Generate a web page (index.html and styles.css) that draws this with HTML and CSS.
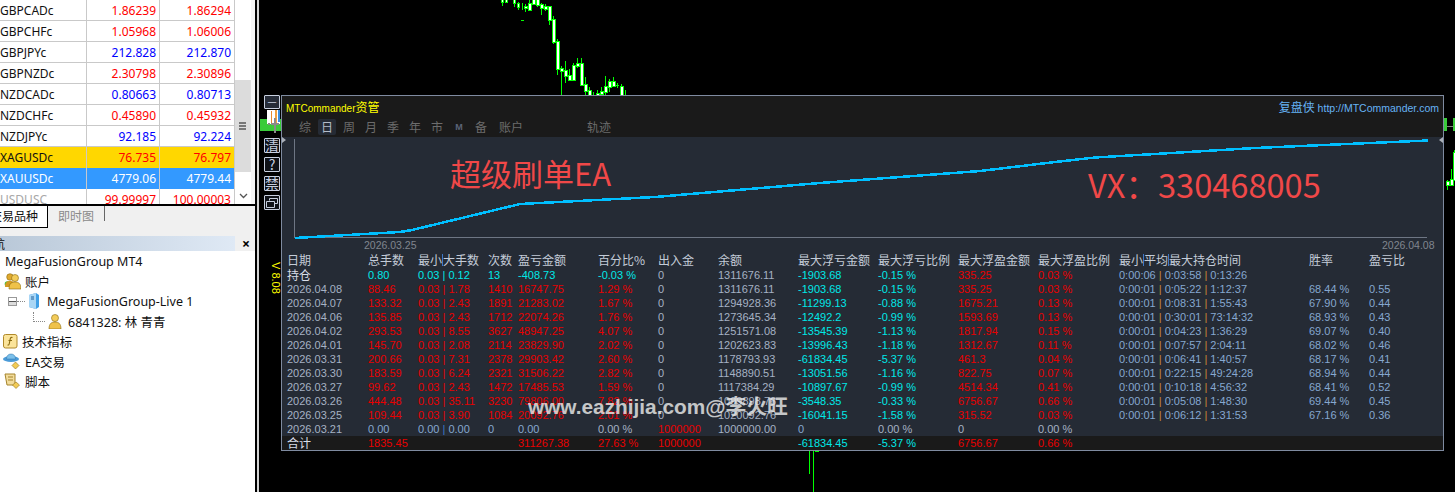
FILE: index.html
```html
<!DOCTYPE html>
<html lang="zh">
<head>
<meta charset="utf-8">
<title>MTCommander</title>
<link rel="stylesheet" href="styles.css">
</head>
<body>
<div class="app">
  <aside class="left">
    <div class="watch">
      <div class="quotes">
        <div class="quote"><span class="sym">GBPCADc</span><span class="px dn">1.86239</span><span class="px dn">1.86294</span></div>
        <div class="quote"><span class="sym">GBPCHFc</span><span class="px dn">1.05968</span><span class="px dn">1.06006</span></div>
        <div class="quote"><span class="sym">GBPJPYc</span><span class="px up">212.828</span><span class="px up">212.870</span></div>
        <div class="quote"><span class="sym">GBPNZDc</span><span class="px dn">2.30798</span><span class="px dn">2.30896</span></div>
        <div class="quote"><span class="sym">NZDCADc</span><span class="px up">0.80663</span><span class="px up">0.80713</span></div>
        <div class="quote"><span class="sym">NZDCHFc</span><span class="px dn">0.45890</span><span class="px dn">0.45932</span></div>
        <div class="quote"><span class="sym">NZDJPYc</span><span class="px up">92.185</span><span class="px up">92.224</span></div>
        <div class="quote gold"><span class="sym">XAGUSDc</span><span class="px dn">76.735</span><span class="px dn">76.797</span></div>
        <div class="quote sel"><span class="sym">XAUUSDc</span><span class="px">4779.06</span><span class="px">4779.44</span></div>
        <div class="quote last"><span class="sym off">USDUSC</span><span class="px dn">99.99997</span><span class="px dn">100.00003</span></div>
      </div>
      <div class="scroll">
        <div class="track-top"></div>
        <div class="thumb"><svg width="8" height="9" viewBox="0 0 8 9"><path d="M0 1h7M0 4h7M0 7h7" stroke="#555" stroke-width="1.4"/></svg></div>
        <div class="track-bottom"></div>
        <div class="arrow"><svg width="9" height="6" viewBox="0 0 9 6"><path d="M1 1l3.500 3.500L8 1" stroke="#555" fill="none" stroke-width="1.300"/></svg></div>
      </div>
    </div>
    <div class="tabs">
      <div class="tab on"><span>交易品种</span></div>
      <div class="tab"><span>即时图</span></div>
      <div class="tab-sep"></div>
    </div>
    <div class="navhead"><span class="navtitle">导航</span><span class="navclose">×</span></div>
    <div class="tree">
      <div class="node n0"><span>MegaFusionGroup MT4</span></div>
      <div class="node n1">
        <svg width="18" height="18" viewBox="0 0 18 18"><circle cx="4.500" cy="12" r="2.800" fill="#3fbf3f"/><circle cx="7" cy="5" r="3.300" fill="#e0a92e" stroke="#8a6a10" stroke-width=".6"/><path d="M2 15c0-5 2-6 5-6s5 1 5 6z" fill="#d39a22"/><circle cx="12" cy="6" r="3.500" fill="#f3cc5a" stroke="#8a6a10" stroke-width=".6"/><path d="M6 17c0-6 3-7 6-7s6 1 6 7z" fill="#efc24a" stroke="#8a6a10" stroke-width=".6"/></svg>
        <span>账户</span>
      </div>
      <div class="node n2">
        <i class="expander"></i><i class="dots-h"></i>
        <svg width="12" height="16" viewBox="0 0 12 16"><path d="M1 2l7-2 3 2v12l-3 2-7-2z" fill="#3f9fe6"/><path d="M1 2l7-2v16l-7-2z" fill="#a9d6f5"/><path d="M3 4h3M3 6h3" stroke="#20609a"/></svg>
        <span>MegaFusionGroup-Live 1</span>
      </div>
      <div class="node n3">
        <i class="dots-l"></i>
        <svg width="14" height="15" viewBox="0 0 14 15"><circle cx="7" cy="4" r="3.500" fill="#f3cc5a" stroke="#8a6a10" stroke-width=".6"/><path d="M1 15c0-6 3-7 6-7s6 1 6 7z" fill="#efc24a" stroke="#8a6a10" stroke-width=".6"/></svg>
        <span>6841328: 林 青青</span>
      </div>
      <div class="node n1">
        <svg width="15" height="15" viewBox="0 0 15 15"><rect x=".5" y=".5" width="13.500" height="13.500" rx="2" fill="#fbe49a" stroke="#b0892a"/><path d="M9.500 3.500c-2-.5-2.200.8-2.500 2.500l-.8 4c-.2 1-.8 1.200-1.700 1M5.500 6.500h3.500" stroke="#8a6a10" fill="none" stroke-width="1.100"/></svg>
        <span>技术指标</span>
      </div>
      <div class="node n1">
        <svg width="18" height="16" viewBox="0 0 18 16"><ellipse cx="8" cy="6" rx="8" ry="3" fill="#4a9bd8"/><path d="M3.500 6c0-3.500 2-5 4.500-5s4.500 1.500 4.500 5z" fill="#7cc0ea" stroke="#2f72a8" stroke-width=".5"/><path d="M12.500 9l3.500 3.500-3.500 3.500-3.500-3.500z" fill="#f2cb55" stroke="#96721a" stroke-width=".6"/></svg>
        <span>EA交易</span>
      </div>
      <div class="node n1">
        <svg width="18" height="16" viewBox="0 0 18 16"><path d="M2 1h10v11H4z" fill="#f2dc9c" stroke="#a5842c"/><path d="M5 4h5M5 7h5" stroke="#a5842c"/><path d="M13 9l3.500 3-3.500 3.500-3.500-3.500z" fill="#f2cb55" stroke="#96721a" stroke-width=".6"/></svg>
        <span>脚本</span>
      </div>
    </div>
  </aside>

  <main class="chart">
    <svg class="candles" width="1196" height="492" viewBox="259 0 1196 492" shape-rendering="crispEdges">
      <path class="wick" d="M502.500 0V6M514.500 0V7M518.500 2V10M522.500 3V10M525.500 4V12M529.500 0V11M537.500 0V7M541.500 3V15M545.500 4V11M549.500 6V25M553.500 16V44M557.500 39V75M561.500 66V95M565.500 61V83M569.500 69V81M573.500 63V81M577.500 58V68M581.500 58V86M585.500 77V95M589.500 87V95M593.500 92V95M597.500 90V95M601.500 87V95M605.500 76V95M609.500 79V92M613.500 77V87M617.500 83V88M621.500 84V95M625.500 90V95M809.500 451V474M813.500 451V492M815 451.500H819M1447.500 180V190M1451.500 169V185M1454.500 150V180M521 20.500H524M616 85.500H619"/>
      <g class="body">
        <rect x="501.500" y="-1" width="2" height="3"/><rect x="505.500" y="-1" width="2" height="3"/><rect x="513.500" y="-1" width="2" height="4"/><rect x="517.500" y="3" width="2" height="4"/><rect x="524" y="6" width="3" height="2"/><rect x="528" y="3" width="3" height="7"/><rect x="532" y="-1" width="3" height="5"/><rect x="536" y="-1" width="3" height="6"/><rect x="540" y="4" width="3" height="4"/><rect x="544" y="6" width="3" height="3"/><rect x="548" y="6" width="3" height="14"/><rect x="552" y="19" width="3" height="23"/><rect x="556" y="41" width="3" height="28"/><rect x="560" y="68" width="3" height="3"/><rect x="564" y="70" width="3" height="6"/><rect x="568" y="75" width="3" height="5"/><rect x="572" y="65" width="3" height="15"/><rect x="576" y="63" width="3" height="3"/><rect x="580" y="63" width="3" height="22"/><rect x="584" y="84" width="3" height="7"/><rect x="588" y="90" width="3" height="6"/><rect x="596" y="93" width="3" height="3"/><rect x="600" y="91" width="3" height="3"/><rect x="604" y="86" width="3" height="6"/><rect x="608" y="81" width="3" height="6"/><rect x="612" y="81" width="3" height="5"/><rect x="620" y="86" width="3" height="10"/><rect x="1446" y="181" width="3" height="4"/><rect x="1450" y="179" width="3" height="6"/><rect x="1453" y="152" width="3" height="28"/>
      </g>
      <path class="gridline" d="M278 126.500H281M1447 126.500H1453"/>
      <path class="lime" d="M260 119h21v12h-21zM1444 118h3v13h-3zM1453 118h2v13h-2z"/>
    </svg>

    <svg class="glitch" width="15" height="24" viewBox="0 0 15 24" shape-rendering="crispEdges">
      <rect x="0" y="0" width="13" height="14" fill="#fff"/><rect x="4" y="1" width="1" height="12" fill="#e88a2e"/><rect x="8" y="0" width="2" height="13" fill="#f0a040"/><rect x="11" y="0" width="2" height="12" fill="#3a8ee0"/>
      <path d="M4 13h8v2H4zM1 13h2v2H1zM7 8h2v15H7z" fill="#8a8a8a"/>
    </svg>

    <div class="side">
      <div class="sbtn first">一</div>
      <div class="sbtn">清</div>
      <div class="sbtn">?</div>
      <div class="sbtn">禁</div>
      <div class="sbtn"><svg width="12" height="10" viewBox="0 0 12 10"><path d="M3.500 2.500v-2h8v5h-3M.5 3.500h8v6h-8z" fill="none" stroke="#c8d0e0"/></svg></div>
    </div>
    <div class="version">V 8.08</div>

    <section class="panel">
      <header class="phead">
        <div class="ptitle">
          <span class="brand">MTCommander<b>资管</b></span>
          <span class="plink"><b>复盘侠</b> http://MTCommander.com</span>
        </div>
        <nav class="pnav">
          <span>综</span><span class="active">日</span><span>周</span><span>月</span><span>季</span><span>年</span><span>市</span><span class="m">M</span><span>备</span><span class="wide">账户</span><span class="track">轨迹</span>
        </nav>
      </header>
      <div class="graph">
        <svg class="curve" width="1161" height="115" viewBox="282 137 1161 115">
          <path class="axis" d="M294.500 139V237.500H1427" shape-rendering="crispEdges"/>
          <path class="equity" d="M295 238L400 232L412 230L520 204L655 197L820 183L980 171L1055 162L1095 157.500L1155 154L1255 148L1428 140.500"/>
          <path class="marker" d="M282 137l4 3-4 3zM1443 137l-4 3 4 3z"/>
        </svg>
        <div class="stamp stamp-a">超级刷单EA</div>
        <div class="stamp stamp-b">VX：330468005</div>
        <div class="gdate d1">2026.03.25</div>
        <div class="gdate d2">2026.04.08</div>
      </div>
      <div class="table">
        <div class="row head"><span>日期</span><span>总手数</span><span>最小<i class="bar-b"></i>大手数</span><span>次数</span><span>盈亏金额</span><span>百分比%</span><span>出入金</span><span>余额</span><span>最大浮亏金额</span><span>最大浮亏比例</span><span>最大浮盈金额</span><span>最大浮盈比例</span><span>最小<i class="bar-b"></i>平均<i class="bar-b"></i>最大持仓时间</span><span>胜率</span><span>盈亏比</span></div>
        <div class="row hold"><span class="label">持仓</span><span class="c">0.80</span><span class="c">0.03 | 0.12</span><span class="c">13</span><span class="c">-408.73</span><span class="c">-0.03 %</span><span class="g">0</span><span class="g">1311676.11</span><span class="c">-1903.68</span><span class="c">-0.15 %</span><span class="r">335.25</span><span class="r">0.03 %</span><span class="b">0:00:06 <i class="bar-o">|</i> 0:03:58 <i class="bar-o">|</i> 0:13:26</span><span></span><span></span></div>
        <div class="row"><span class="g">2026.04.08</span><span class="r">88.46</span><span class="r">0.03 | 1.78</span><span class="r">1410</span><span class="r">16747.75</span><span class="r">1.29 %</span><span class="g">0</span><span class="g">1311676.11</span><span class="c">-1903.68</span><span class="c">-0.15 %</span><span class="r">335.25</span><span class="r">0.03 %</span><span class="b">0:00:01 <i class="bar-o">|</i> 0:05:22 <i class="bar-o">|</i> 1:12:37</span><span class="b">68.44 %</span><span class="b">0.55</span></div>
        <div class="row"><span class="g">2026.04.07</span><span class="r">133.32</span><span class="r">0.03 | 2.43</span><span class="r">1891</span><span class="r">21283.02</span><span class="r">1.67 %</span><span class="g">0</span><span class="g">1294928.36</span><span class="c">-11299.13</span><span class="c">-0.88 %</span><span class="r">1675.21</span><span class="r">0.13 %</span><span class="b">0:00:01 <i class="bar-o">|</i> 0:08:31 <i class="bar-o">|</i> 1:55:43</span><span class="b">67.90 %</span><span class="b">0.44</span></div>
        <div class="row"><span class="g">2026.04.06</span><span class="r">135.85</span><span class="r">0.03 | 2.43</span><span class="r">1712</span><span class="r">22074.26</span><span class="r">1.76 %</span><span class="g">0</span><span class="g">1273645.34</span><span class="c">-12492.2</span><span class="c">-0.99 %</span><span class="r">1593.69</span><span class="r">0.13 %</span><span class="b">0:00:01 <i class="bar-o">|</i> 0:30:01 <i class="bar-o">|</i> 73:14:32</span><span class="b">68.93 %</span><span class="b">0.43</span></div>
        <div class="row"><span class="g">2026.04.02</span><span class="r">293.53</span><span class="r">0.03 | 8.55</span><span class="r">3627</span><span class="r">48947.25</span><span class="r">4.07 %</span><span class="g">0</span><span class="g">1251571.08</span><span class="c">-13545.39</span><span class="c">-1.13 %</span><span class="r">1817.94</span><span class="r">0.15 %</span><span class="b">0:00:01 <i class="bar-o">|</i> 0:04:23 <i class="bar-o">|</i> 1:36:29</span><span class="b">69.07 %</span><span class="b">0.40</span></div>
        <div class="row"><span class="g">2026.04.01</span><span class="r">145.70</span><span class="r">0.03 | 2.08</span><span class="r">2114</span><span class="r">23829.90</span><span class="r">2.02 %</span><span class="g">0</span><span class="g">1202623.83</span><span class="c">-13996.43</span><span class="c">-1.18 %</span><span class="r">1312.67</span><span class="r">0.11 %</span><span class="b">0:00:01 <i class="bar-o">|</i> 0:07:57 <i class="bar-o">|</i> 2:04:11</span><span class="b">68.02 %</span><span class="b">0.46</span></div>
        <div class="row"><span class="g">2026.03.31</span><span class="r">200.66</span><span class="r">0.03 | 7.31</span><span class="r">2378</span><span class="r">29903.42</span><span class="r">2.60 %</span><span class="g">0</span><span class="g">1178793.93</span><span class="c">-61834.45</span><span class="c">-5.37 %</span><span class="r">461.3</span><span class="r">0.04 %</span><span class="b">0:00:01 <i class="bar-o">|</i> 0:06:41 <i class="bar-o">|</i> 1:40:57</span><span class="b">68.17 %</span><span class="b">0.41</span></div>
        <div class="row"><span class="g">2026.03.30</span><span class="r">183.59</span><span class="r">0.03 | 6.24</span><span class="r">2321</span><span class="r">31506.22</span><span class="r">2.82 %</span><span class="g">0</span><span class="g">1148890.51</span><span class="c">-13051.56</span><span class="c">-1.16 %</span><span class="r">822.75</span><span class="r">0.07 %</span><span class="b">0:00:01 <i class="bar-o">|</i> 0:22:15 <i class="bar-o">|</i> 49:24:28</span><span class="b">68.94 %</span><span class="b">0.44</span></div>
        <div class="row"><span class="g">2026.03.27</span><span class="r">99.62</span><span class="r">0.03 | 2.43</span><span class="r">1472</span><span class="r">17485.53</span><span class="r">1.59 %</span><span class="g">0</span><span class="g">1117384.29</span><span class="c">-10897.67</span><span class="c">-0.99 %</span><span class="r">4514.34</span><span class="r">0.41 %</span><span class="b">0:00:01 <i class="bar-o">|</i> 0:10:18 <i class="bar-o">|</i> 4:56:32</span><span class="b">68.41 %</span><span class="b">0.52</span></div>
        <div class="row"><span class="g">2026.03.26</span><span class="r">444.48</span><span class="r">0.03 | 35.11</span><span class="r">3230</span><span class="r">79806.00</span><span class="r">7.82 %</span><span class="g">0</span><span class="g">1099898.76</span><span class="c">-3548.35</span><span class="c">-0.33 %</span><span class="r">6756.67</span><span class="r">0.66 %</span><span class="b">0:00:01 <i class="bar-o">|</i> 0:05:08 <i class="bar-o">|</i> 1:48:30</span><span class="b">69.44 %</span><span class="b">0.45</span></div>
        <div class="row"><span class="g">2026.03.25</span><span class="r">109.44</span><span class="r">0.03 | 3.90</span><span class="r">1084</span><span class="r">20092.76</span><span class="r">2.01 %</span><span class="g">0</span><span class="g">1020092.76</span><span class="c">-16041.15</span><span class="c">-1.58 %</span><span class="r">315.52</span><span class="r">0.03 %</span><span class="b">0:00:01 <i class="bar-o">|</i> 0:06:12 <i class="bar-o">|</i> 1:31:53</span><span class="b">67.16 %</span><span class="b">0.36</span></div>
        <div class="row"><span class="g">2026.03.21</span><span class="b">0.00</span><span class="b">0.00 <i class="bar-t">|</i> 0.00</span><span class="b">0</span><span class="b">0.00</span><span class="g">0.00 %</span><span class="r">1000000</span><span class="g">1000000.00</span><span class="b">0</span><span class="g">0.00 %</span><span class="g">0</span><span class="g">0.00 %</span><span></span><span></span><span></span></div>
        <div class="row total"><span class="label">合计</span><span class="r">1835.45</span><span></span><span></span><span class="r">311267.38</span><span class="r">27.63 %</span><span class="r">1000000</span><span></span><span class="c">-61834.45</span><span class="c">-5.37 %</span><span class="r">6756.67</span><span class="r">0.66 %</span><span></span><span></span><span></span></div>
      </div>
    </section>
    <div class="watermark">www.eazhijia.com@李火旺</div>
  </main>
</div>
</body>
</html>
```
FILE: styles.css
```css
* { box-sizing: border-box; }
html, body { margin: 0; height: 100%; background: #000; overflow: hidden; }
i { font-style: normal; }

.app { display: flex; width: 1455px; height: 492px; }

/* left column */
.left {
  width: 255px; flex: none; display: flex; flex-direction: column;
  background: #f0f0f0; overflow: hidden;
  font-family: "Noto Sans", "Noto Sans CJK SC", sans-serif; color: #111;
}
.watch { display: flex; height: 206px; background: #f4f4f4; padding-right: 4px; border-bottom: 2px solid #000; flex: none; }
.quotes { width: 235px; flex: none; overflow: hidden; background: #fff; }
.quote {
  display: grid; grid-template-columns: 87px 73px 75px; height: 21px;
  border-bottom: 1px solid #c9c9c9; font-size: 12px; line-height: 21px;
}
.quote.gold { background: #ffd700; border-bottom-color: #ffd700; }
.quote.sel { background: #3399ff; color: #fff; border-bottom-color: #3399ff; }
.quote.last { border-bottom: 0; }
.sym { border-right: 1px solid #c9c9c9; white-space: nowrap; overflow: hidden; }
.off { color: #a8a8a8; }
.px { text-align: right; padding-right: 3px; border-right: 1px solid #c9c9c9; white-space: nowrap; }
.dn { color: #ff0000; }
.up { color: #0000ff; }
.scroll { width: 16px; flex: none; display: flex; flex-direction: column; background: #fff; }
.track-top { height: 80px; flex: none; }
.thumb { height: 92px; flex: none; background: #dcdcdc; display: flex; align-items: center; justify-content: center; }
.track-bottom { flex: 1; }
.arrow { height: 17px; flex: none; display: flex; align-items: center; justify-content: center; }

.tabs { display: flex; height: 23px; flex: none; align-items: flex-start; font-size: 12px; }
.tab { height: 22px; line-height: 21px; color: #8a8a8a; overflow: hidden; padding: 0 10px; }
.tab.on {
  width: 48px; padding: 0 9px 0 0; background: #fff; color: #111;
  border-right: 1px solid #000; border-bottom: 1px solid #000;
  display: flex; justify-content: flex-end; white-space: nowrap; font-size: 12px;
}
.tab.on span { flex: none; }
.tab-sep { width: 1px; height: 15px; background: #666; margin-left: 0; }

.navhead {
  height: 15px; margin: 7px 0 0; flex: none; display: flex; justify-content: space-between; align-items: center;
  background: linear-gradient(90deg, #b9c8d8, #dfe9f5 92%, #f0f0f0 92%);
  font-size: 12px; overflow: hidden; padding-right: 5px;
}
.navtitle { display: block; width: 5px; overflow: hidden; direction: rtl; white-space: nowrap; }
.navclose { font-weight: 700; font-size: 14px; line-height: 14px; color: #000; }
.tree { flex: 1; background: #fff; font-size: 12.500px; }
.node { height: 20px; display: flex; align-items: center; white-space: nowrap; }
.n0 { padding-left: 5px; }
.n1 { padding-left: 3px; gap: 4px; }
.n2 { padding-left: 8px; }
.n2 svg { margin: 0 7px 0 3px; }
.n3 { padding-left: 33px; }
.n3 .dots-l + svg { margin: 0 6px 0 3px; }
.expander { width: 9px; height: 9px; border: 1px solid #999; background: linear-gradient(#fff 3px, #555 3px, #555 4px, #ddd 4px); }
.dots-h { width: 8px; border-top: 1px dotted #888; }
.dots-l { width: 12px; height: 10px; border-left: 1px dotted #888; border-bottom: 1px dotted #888; margin-top: -8px; }

/* chart */
.chart { flex: 1; position: relative; background: #000; border-left: 2px solid #d4d4d4; margin-left: 2px; overflow: hidden; }
.candles { position: absolute; left: 0; top: 0; }
.wick { stroke: #00ff00; fill: none; }
.body rect { fill: #fff; stroke: #00ff00; }
.gridline { stroke: #808080; }
.lime { fill: #3acb3a; }
.glitch { position: absolute; left: 8px; top: 110px; }

.side {
  position: absolute; left: 5px; top: 95px; width: 16px;
  display: flex; flex-direction: column; gap: 4px;
}
.sbtn {
  width: 16px; height: 15px; border: 1px solid #c8d0e0; border-radius: 1px; background: #0f1218;
  color: #c8d0e0; font: 14px/13px "Noto Sans CJK SC", sans-serif; text-align: center;
  display: flex; align-items: center; justify-content: center; overflow: hidden;
}
.sbtn.first { height: 14px; margin-bottom: 25px; font-size: 9px; background: #262c38; }
.version {
  position: absolute; left: 11px; top: 262px; writing-mode: vertical-rl;
  font: 11px/12px "Liberation Sans", sans-serif; color: #ffff00;
}

.panel {
  position: absolute; left: 22px; top: 95px; width: 1163px; height: 356px;
  display: flex; flex-direction: column;
  border: 1px solid #7f8ba0; background: #252b35;
  font: 11px/14px "Liberation Sans", "Noto Sans CJK SC", sans-serif;
}
.phead { height: 41px; flex: none; background: #1a1a1a; display: flex; flex-direction: column; }
.ptitle { height: 21px; display: flex; justify-content: space-between; align-items: center; padding: 0 4px 0 4px; }
.brand { color: #ffff00; font-size: 10px; }
.brand b, .plink b { font: 12px "Noto Sans CJK SC", sans-serif; }
.plink { color: #66b3f5; font-size: 10.500px; }
.pnav { display: flex; padding-left: 14px; height: 20px; align-items: center; color: #6c6c6c; font: 12px "Noto Sans CJK SC", sans-serif; }
.pnav span { width: 18px; margin-right: 4px; height: 16px; line-height: 16px; text-align: center; border-radius: 2px; flex: none; }
.pnav .active { background: #252b35; color: #b4bcc8; }
.pnav .m { font: 700 9px/16px "Liberation Sans", sans-serif; color: #5a6478; }
.pnav .wide { width: 26px; margin: 0 62px 0 4px; }
.pnav .track { width: 26px; }

.graph { height: 116px; flex: none; position: relative; }
.curve { display: block; }
.axis { stroke: #6e7684; fill: none; }
.equity { stroke: #00bfff; stroke-width: 2.500; fill: none; shape-rendering: crispEdges; }
.marker { fill: #aab0b8; }
.stamp { position: absolute; color: #f04848; font-family: "Noto Sans CJK SC", sans-serif; white-space: nowrap; line-height: 1; }
.stamp-a { left: 168px; top: 20px; font-size: 31px; }
.stamp-b { left: 806px; top: 31px; font-size: 32.600px; }
.gdate { position: absolute; top: 102px; color: #80868f; font-size: 10.500px; line-height: 12px; }
.d1 { left: 82px; }
.d2 { left: 1100px; }

.table { flex: 1; display: flex; flex-direction: column; }
.row {
  display: grid; height: 14px; flex: none; padding-left: 5px; white-space: nowrap;
  grid-template-columns: 81px 50px 70px 30px 80px 60px 60px 80px 80px 80px 80px 81px 190px 60px 60px;
}
.head { height: 15px; color: #c4ccd8; font: 12px/14px "Noto Sans CJK SC", sans-serif; }
.bar-b { display: inline-block; width: 1px; height: 12px; vertical-align: -1px; background: #3f78c8; }
.hold .label, .total .label { color: #d8dee8; font: 12px/14px "Noto Sans CJK SC", sans-serif; }
.total { background: #1a1a1a; }
.r { color: #e80000; }
.c { color: #00e8e8; }
.g { color: #a6b2c4; }
.b { color: #86a8d0; }
.bar-t { color: #3f78c8; }
.bar-o { color: #c88838; }

.watermark {
  position: absolute; left: 269px; top: 396px;
  font: 700 20.800px/22px "Liberation Sans", "Noto Sans CJK SC", sans-serif;
  color: rgba(235, 235, 235, .82); white-space: nowrap;
}
```
